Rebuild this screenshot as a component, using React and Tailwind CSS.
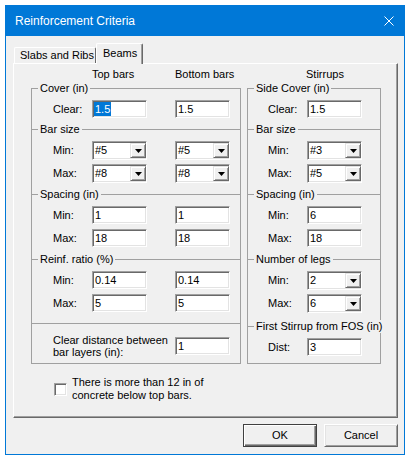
import React from "react";

const sunken =
  "bg-white border border-t-[#a0a0a0] border-l-[#a0a0a0] border-r-white border-b-white shadow-[inset_1px_1px_0_#696969,inset_-1px_-1px_0_#e3e3e3]";

function TextBox({ value, sel }) {
  return (
    <div className={`w-[55px] h-[18px] shrink-0 ${sunken} flex items-center pl-[1px]`}>
      {sel ? (
        <span className="bg-[#0078d7] text-white px-[1px] leading-[14px]">{value}</span>
      ) : (
        <span className="pl-[1px]">{value}</span>
      )}
    </div>
  );
}

function Combo({ value }) {
  return (
    <div className={`w-[55px] h-[19px] shrink-0 ${sunken} flex py-[1px] pl-[1px]`}>
      <div className="flex-1 flex items-center pl-[1px]">{value}</div>
      <div className="w-[16px] h-full bg-[#f0f0f0] border border-t-[#e3e3e3] border-l-[#e3e3e3] border-r-[#696969] border-b-[#696969] shadow-[inset_1px_1px_0_#ffffff,inset_-1px_-1px_0_#a0a0a0] flex items-center justify-center">
        <svg width="7" height="4" viewBox="0 0 7 4">
          <polygon points="0,0 7,0 3.5,4" fill="#000" />
        </svg>
      </div>
    </div>
  );
}

function Section({ title, className = "", children }) {
  return (
    <div className={`relative border-t border-[#a0a0a0] flex flex-col ${className}`}>
      {title && (
        <span className="absolute top-[-7px] left-[6px] px-[2px] bg-[#f0f0f0] leading-[13px] whitespace-nowrap">
          {title}
        </span>
      )}
      {children}
    </div>
  );
}

function LRow({ label, children, h = "h-[18px]" }) {
  return (
    <div className={`flex items-center ${h} pl-[21px]`}>
      <span className="w-[39px] shrink-0">{label}</span>
      {children}
    </div>
  );
}

function RRow({ label, children, h = "h-[18px]" }) {
  return (
    <div className={`flex items-center ${h} pl-[20px]`}>
      <span className="w-[39px] shrink-0">{label}</span>
      {children}
    </div>
  );
}

function Gap2({ a, b }) {
  return (
    <>
      {a}
      <div className="w-[28px] shrink-0" />
      {b}
    </>
  );
}

export default function App() {
  return (
    <div className="w-[410px] h-[460px] bg-white p-[5px] font-['Liberation_Sans',Arial,sans-serif] text-[11px] leading-[13px] text-black">
      <div className="w-[400px] h-[450px] border border-[#0078d7] bg-[#f0f0f0] flex flex-col">
        {/* Title bar */}
        <div className="h-[30px] shrink-0 bg-[#0078d7] flex items-center justify-between pl-[9px] pr-[10px]">
          <span className="text-white text-[12px] leading-[15px]">Reinforcement Criteria</span>
          <svg width="10" height="10" viewBox="0 0 10 10">
            <path d="M0.5 0.5 L9.5 9.5 M9.5 0.5 L0.5 9.5" stroke="white" strokeWidth="1" />
          </svg>
        </div>

        {/* Body */}
        <div className="flex-1 flex flex-col pl-[7px] pr-[6px]">
          {/* Tabs */}
          <div className="h-[27px] shrink-0 flex items-end">
            <div className="ml-[1px] w-[82px] h-[16px] border-t border-l border-white border-r border-r-[#696969] rounded-t-[2px] flex items-center pl-[5px]">
              Slabs and Ribs
            </div>
            <div className="relative z-10 w-[47px] h-[21px] -mb-[1px] bg-[#f0f0f0] border-t border-l border-white border-r border-r-[#696969] shadow-[inset_-1px_0_0_#a0a0a0] rounded-t-[2px] flex items-start pt-[3px] pl-[6px]">
              Beams
            </div>
          </div>

          {/* Panel */}
          <div className="h-[355px] shrink-0 border border-t-white border-l-white border-r-[#696969] border-b-[#696969] shadow-[inset_-1px_-1px_0_#a0a0a0] flex flex-col pl-[17px]">
            {/* headers */}
            <div className="h-[24px] shrink-0 flex items-start pt-[4px] pl-[61px]">
              <span className="w-[83px]">Top bars</span>
              <span className="w-[131px]">Bottom bars</span>
              <span>Stirrups</span>
            </div>

            <div className="flex items-start gap-[6px]">
              {/* Left group */}
              <div className="w-[210px] border-l border-r border-b border-[#a0a0a0] flex flex-col">
                <Section title="Cover (in)" className="pt-[11px] pb-[11px]">
                  <LRow label="Clear:">
                    <Gap2 a={<TextBox value="1.5" sel />} b={<TextBox value="1.5" />} />
                  </LRow>
                </Section>
                <Section title="Bar size" className="pt-[11px] pb-[11px] gap-[4px]">
                  <LRow label="Min:" h="h-[19px]">
                    <Gap2 a={<Combo value="#5" />} b={<Combo value="#5" />} />
                  </LRow>
                  <LRow label="Max:" h="h-[19px]">
                    <Gap2 a={<Combo value="#8" />} b={<Combo value="#8" />} />
                  </LRow>
                </Section>
                <Section title="Spacing (in)" className="pt-[11px] pb-[12px] gap-[5px]">
                  <LRow label="Min:">
                    <Gap2 a={<TextBox value="1" />} b={<TextBox value="1" />} />
                  </LRow>
                  <LRow label="Max:">
                    <Gap2 a={<TextBox value="18" />} b={<TextBox value="18" />} />
                  </LRow>
                </Section>
                <Section title="Reinf. ratio (%)" className="pt-[11px] pb-[11px] gap-[5px]">
                  <LRow label="Min:">
                    <Gap2 a={<TextBox value="0.14" />} b={<TextBox value="0.14" />} />
                  </LRow>
                  <LRow label="Max:">
                    <Gap2 a={<TextBox value="5" />} b={<TextBox value="5" />} />
                  </LRow>
                </Section>
                <Section className="pt-[10px] pb-[5px]">
                  <div className="flex items-center h-[24px] pl-[21px]">
                    <span className="w-[122px] shrink-0 leading-[12px]">
                      Clear distance between
                      <br />
                      bar layers (in):
                    </span>
                    <TextBox value="1" />
                  </div>
                </Section>
              </div>

              {/* Right group */}
              <div className="w-[134px] border-l border-r border-b border-[#a0a0a0] flex flex-col">
                <Section title="Side Cover (in)" className="pt-[11px] pb-[11px]">
                  <RRow label="Clear:">
                    <TextBox value="1.5" />
                  </RRow>
                </Section>
                <Section title="Bar size" className="pt-[11px] pb-[11px] gap-[4px]">
                  <RRow label="Min:" h="h-[19px]">
                    <Combo value="#3" />
                  </RRow>
                  <RRow label="Max:" h="h-[19px]">
                    <Combo value="#5" />
                  </RRow>
                </Section>
                <Section title="Spacing (in)" className="pt-[11px] pb-[12px] gap-[5px]">
                  <RRow label="Min:">
                    <TextBox value="6" />
                  </RRow>
                  <RRow label="Max:">
                    <TextBox value="18" />
                  </RRow>
                </Section>
                <Section title="Number of legs" className="pt-[11px] pb-[13px] gap-[4px]">
                  <RRow label="Min:" h="h-[19px]">
                    <Combo value="2" />
                  </RRow>
                  <RRow label="Max:" h="h-[19px]">
                    <Combo value="6" />
                  </RRow>
                </Section>
                <Section title="First Stirrup from FOS (in)" className="pt-[11px] pb-[7px]">
                  <RRow label="Dist:">
                    <TextBox value="3" />
                  </RRow>
                </Section>
              </div>
            </div>

            {/* Checkbox */}
            <div className="mt-[12px] flex items-center pl-[23px]">
              <div className={`w-[13px] h-[13px] shrink-0 ${sunken}`} />
              <span className="ml-[5px] leading-[13px]">
                There is more than 12 in of
                <br />
                concrete below top bars.
              </span>
            </div>
          </div>

          {/* Buttons */}
          <div className="mt-[6px] flex justify-end gap-[7px]">
            <button className="w-[74px] h-[23px] bg-[#f0f0f0] border border-[#404040] shadow-[inset_1px_1px_0_#ffffff,inset_-1px_-1px_0_#696969,inset_-2px_-2px_0_#a0a0a0] flex items-center justify-center">
              OK
            </button>
            <button className="w-[74px] h-[23px] bg-[#f0f0f0] border border-t-white border-l-white border-r-[#696969] border-b-[#696969] shadow-[inset_1px_1px_0_#e3e3e3,inset_-1px_-1px_0_#a0a0a0] flex items-center justify-center">
              Cancel
            </button>
          </div>
        </div>
      </div>
    </div>
  );
}
